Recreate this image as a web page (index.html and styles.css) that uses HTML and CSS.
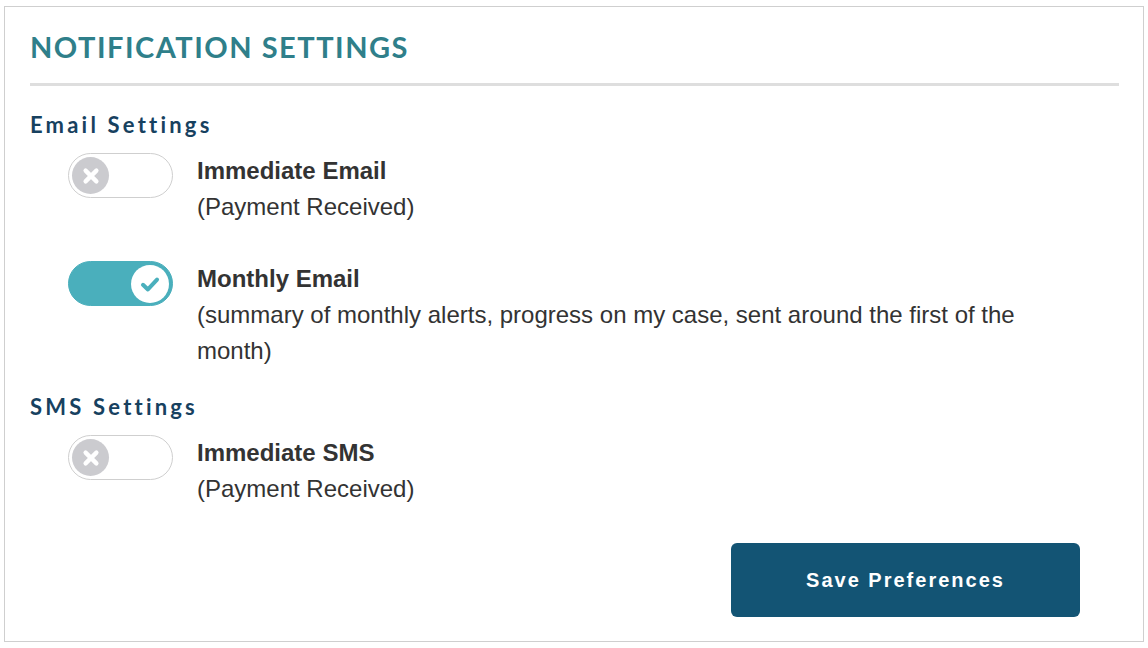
FILE: index.html
```html
<!DOCTYPE html>
<html lang="en">
<head>
    <meta charset="UTF-8">
    <meta name="viewport" content="width=device-width, initial-scale=1.0">
    <title>Notification Settings</title>
    <link rel="stylesheet" href="styles.css">
</head>
<body>
    <div class="card">
        <h1 class="card-title">NOTIFICATION SETTINGS</h1>

        <div class="section">
            <h2 class="section-title">Email Settings</h2>

            <div class="item">
                <span class="toggle">
                    <span class="knob">
                        <svg viewBox="0 0 20 20" width="24" height="24"><path d="M5.5 5.5 L14.5 14.5 M14.5 5.5 L5.5 14.5" stroke="#fff" stroke-width="3.6" stroke-linecap="round"/></svg>
                    </span>
                </span>
                <div class="label">
                    <div class="label-title">Immediate Email</div>
                    <div class="label-sub">(Payment Received)</div>
                </div>
            </div>

            <div class="item">
                <span class="toggle on">
                    <span class="knob">
                        <svg viewBox="0 0 20 20" width="26" height="26"><path d="M4.6 10.6 L8.4 14.2 L15.4 6.6" fill="none" stroke="#4aafbc" stroke-width="3.1" stroke-linecap="round" stroke-linejoin="round"/></svg>
                    </span>
                </span>
                <div class="label">
                    <div class="label-title">Monthly Email</div>
                    <div class="label-sub">(summary of monthly alerts, progress on my case, sent around the first of the month)</div>
                </div>
            </div>
        </div>

        <div class="section">
            <h2 class="section-title">SMS Settings</h2>

            <div class="item">
                <span class="toggle">
                    <span class="knob">
                        <svg viewBox="0 0 20 20" width="24" height="24"><path d="M5.5 5.5 L14.5 14.5 M14.5 5.5 L5.5 14.5" stroke="#fff" stroke-width="3.6" stroke-linecap="round"/></svg>
                    </span>
                </span>
                <div class="label">
                    <div class="label-title">Immediate SMS</div>
                    <div class="label-sub">(Payment Received)</div>
                </div>
            </div>
        </div>

        <div class="actions">
            <button class="save-button">Save Preferences</button>
        </div>
    </div>
</body>
</html>
```

FILE: styles.css
```css
body {
    margin: 0;
    font-family: 'Liberation Sans', Arial, sans-serif;
    color: #333;
    background: #fff;
}

.card {
    margin: 6px 4px 0 4px;
    height: 636px;
    box-sizing: border-box;
    border: 1px solid #cfcfcf;
    padding: 22px 24px 0 25px;
}

.card-title {
    margin: 0;
    padding-bottom: 18px;
    border-bottom: 3px solid #dedede;
    font-family: 'Lato', sans-serif;
    font-size: 29px;
    font-weight: 700;
    line-height: 36px;
    letter-spacing: 1.5px;
    color: #2f7f8a;
}

.section {
    margin-top: 23px;
}

.card-title + .section {
    margin-top: 24px;
}

.section-title {
    margin: 0 0 13px 0;
    font-family: 'Lato', sans-serif;
    font-size: 22px;
    font-weight: 700;
    line-height: 30px;
    letter-spacing: 3.2px;
    color: #17415f;
}

.item {
    display: flex;
    align-items: flex-start;
    gap: 24px;
    margin-left: 38px;
    margin-bottom: 36px;
}

.item:last-child {
    margin-bottom: 0;
}

.toggle {
    flex: none;
    width: 105px;
    height: 45px;
    box-sizing: border-box;
    border: 1px solid #cfcfcf;
    border-radius: 23px;
    background: #fff;
    display: flex;
    align-items: center;
    padding: 0 3px;
}

.toggle.on {
    background: #4aafbc;
    border-color: #4aafbc;
    justify-content: flex-end;
}

.knob {
    width: 37px;
    height: 37px;
    border-radius: 50%;
    background: #cbcbcf;
    display: flex;
    align-items: center;
    justify-content: center;
}

.toggle.on .knob {
    width: 38px;
    height: 38px;
    background: #fff;
}

.label {
    flex: 1;
    padding-right: 60px;
    font-size: 24px;
    line-height: 36px;
}

.label-title {
    font-weight: 700;
    color: #333;
}

.label-sub {
    color: #333;
}

.actions {
    display: flex;
    justify-content: flex-end;
    margin-top: 36px;
    padding-right: 39px;
}

.save-button {
    width: 349px;
    height: 74px;
    border: none;
    border-radius: 6px;
    background: #135474;
    color: #fff;
    font-family: 'Liberation Sans', Arial, sans-serif;
    font-size: 20px;
    font-weight: 700;
    letter-spacing: 2px;
    cursor: pointer;
}
```
